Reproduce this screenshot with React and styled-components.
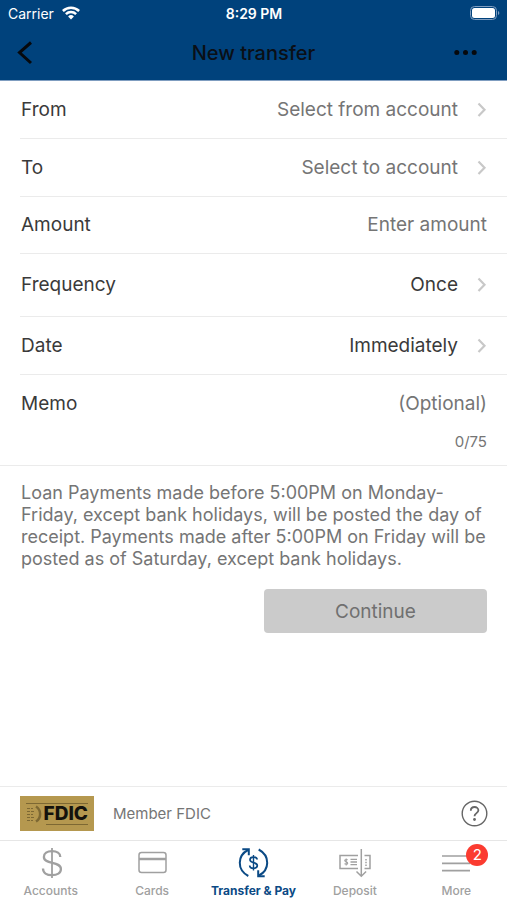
import React, { useState } from 'react';
import styled, { createGlobalStyle } from 'styled-components';

const GlobalStyle = createGlobalStyle`
  * {
    box-sizing: border-box;
  }
  body {
    margin: 0;
    background: #fff;
    color: #3a3a3a;
    font-family: Inter, "Liberation Sans", sans-serif;
  }
  button, input {
    font-family: inherit;
  }
`;

const Screen = styled.div`
  display: flex;
  flex-direction: column;
  min-height: 100vh;
`;

const Header = styled.header`
  background: #00427c;
  border-bottom: 1px solid #7f9dc0;
`;

const StatusBar = styled.div`
  display: grid;
  grid-template-columns: 1fr auto 1fr;
  align-items: center;
  height: 26px;
  padding: 0 7px 0 8px;
  color: #fff;
  font-size: 14px;
`;

const Carrier = styled.span`
  display: flex;
  align-items: center;
  gap: 8px;
`;

const Clock = styled.span`
  font-weight: 600;
`;

const Battery = styled.svg`
  justify-self: end;
`;

const NavBar = styled.div`
  display: grid;
  grid-template-columns: 1fr auto 1fr;
  align-items: center;
  height: 54px;
  padding: 0 16px;
`;

const Title = styled.h1`
  margin: 0;
  color: #0a0f16;
  font-size: 20px;
  font-weight: 500;
`;

const IconButton = styled.button`
  display: flex;
  justify-self: ${(props) => (props.$end ? 'end' : 'start')};
  padding: 0;
  border: none;
  background: none;
  color: ${(props) => props.$color || '#06090d'};
  cursor: pointer;
`;

const Form = styled.form`
  display: flex;
  flex-direction: column;
  flex: 1;
`;

const Row = styled.div`
  display: flex;
  align-items: center;
  height: ${(props) => props.$height || '58px'};
  margin-left: 20px;
  padding: 0 20px 0 1px;
  border-bottom: 1px solid #ebebeb;
`;

const PickerRow = styled(Row).attrs({ as: 'button', type: 'button' })`
  border-width: 0 0 1px;
  border-style: solid;
  background: none;
  color: inherit;
  text-align: left;
  cursor: pointer;
`;

const Label = styled.label`
  flex: 1;
  font-size: 19px;
  line-height: 24px;
`;

const Value = styled.span`
  margin-right: 16px;
  color: ${(props) => (props.$chosen ? '#3a3a3a' : '#757575')};
  font-size: 19px;
  line-height: 24px;
`;

const TextInput = styled.input`
  flex: 1;
  width: 100%;
  min-width: 0;
  padding: 0;
  border: none;
  outline: none;
  background: none;
  color: #3a3a3a;
  font-size: 19px;
  line-height: 24px;
  text-align: right;
  &::placeholder {
    color: #757575;
    opacity: 1;
  }
`;

const MemoBlock = styled.div`
  padding: 17px 20px 13px 21px;
  border-bottom: 1px solid #ebebeb;
`;

const MemoLine = styled.div`
  display: flex;
  align-items: center;
`;

const Counter = styled.div`
  margin-top: 16px;
  color: #757575;
  font-size: 15px;
  line-height: 20px;
  text-align: right;
`;

const Notice = styled.p`
  margin: 16px 16px 19px 21px;
  color: #757575;
  font-size: 18px;
  line-height: 22px;
`;

const SubmitButton = styled.button`
  align-self: flex-end;
  width: 44%;
  height: 44px;
  margin-right: 20px;
  border: none;
  border-radius: 4px;
  background: #cbcbcb;
  color: #707070;
  font-size: 19px;
`;

const MemberBar = styled.div`
  display: flex;
  align-items: center;
  height: 54px;
  padding: 0 19px 0 20px;
  border-top: 1px solid #ebebeb;
`;

const FdicBadge = styled.div`
  display: flex;
  flex-direction: column;
  justify-content: center;
  width: 74px;
  height: 35px;
  padding: 0 6px;
  background: #b5984f;
  color: #14120c;
`;

const BadgeRule = styled.div`
  height: 1px;
  margin-left: ${(props) => props.$indent || '0'};
  background: #7d6833;
`;

const BadgeLine = styled.div`
  display: flex;
  align-items: center;
  justify-content: space-between;
  height: 20px;
  font-size: 19px;
  font-weight: 800;
`;

const MemberText = styled.span`
  flex: 1;
  margin-left: 19px;
  color: #757575;
  font-size: 15px;
`;

const TabBar = styled.nav`
  display: flex;
  height: 60px;
  border-top: 1px solid #e6e6e6;
`;

const Tab = styled.a`
  display: flex;
  flex: 1;
  flex-direction: column;
  align-items: center;
  padding-top: 6px;
  color: ${(props) => (props.$active ? '#0b4a85' : '#a0a0a0')};
  font-size: 12px;
  font-weight: ${(props) => (props.$active ? 700 : 500)};
  line-height: 16px;
  text-decoration: none;
  white-space: nowrap;
`;

const TabIcon = styled.span`
  position: relative;
  display: flex;
  height: 36px;
`;

const Badge = styled.span`
  position: absolute;
  top: -3px;
  right: -16px;
  width: 22px;
  height: 22px;
  border-radius: 50%;
  background: #fb3b30;
  color: #fff;
  font-size: 15px;
  font-weight: 400;
  line-height: 22px;
  text-align: center;
`;

const Chevron = () => (
  <svg width="13" height="16" viewBox="0 0 13 16" fill="none" stroke="#c8c8c8" strokeWidth="2.200">
    <path d="M4.500 1.500l6 6.200-6 6.200" />
  </svg>
);

const WifiIcon = () => (
  <svg width="18" height="14" viewBox="0 0 18 14" fill="none" stroke="#fff" strokeWidth="2.500">
    <path d="M0.900 5a11.600 11.600 0 0 1 16.200 0" />
    <path d="M3.900 8.200a7.300 7.300 0 0 1 10.200 0" />
    <path d="M9 13.500l-2.900-3a4.200 4.200 0 0 1 5.800 0z" fill="#fff" stroke="none" />
  </svg>
);

const DollarIcon = () => (
  <svg width="32" height="32" viewBox="0 0 32 32" fill="none" stroke="currentColor" strokeWidth="2.300">
    <path d="M17 1v30" strokeWidth="1.800" />
    <path d="M25.300 10c0-3.700-3.400-5.800-8.300-5.800S8.900 6.400 8.900 10c0 7.800 17 4 17 12 0 4-3.700 6.200-8.900 6.200s-9-2.400-9-6.700" />
  </svg>
);

const CardIcon = () => (
  <svg width="32" height="32" viewBox="0 0 32 32" fill="none" stroke="currentColor" strokeWidth="1.500">
    <rect x="3" y="5.500" width="27" height="20" rx="2.500" />
    <path d="M3 12h27" strokeWidth="2.500" />
  </svg>
);

const TransferIcon = () => (
  <svg width="32" height="32" viewBox="0 0 32 32" fill="none" stroke="currentColor" strokeWidth="2">
    <path d="M10.300 29C-1.500 22.500-0.500 8.500 10 3" />
    <path d="M4.300 2.200h6.500v6" />
    <path d="M20.700 2.500C32.500 9 31.500 23 21 28.500" />
    <path d="M26.700 29.300h-6.500v-6" />
    <path d="M15.500 8v15.500" strokeWidth="1.400" />
    <path d="M19.100 12.600c0-1.500-1.400-2.500-3.600-2.500s-3.500 1-3.500 2.600c0 3.800 7.300 2.100 7.300 5.900 0 1.700-1.500 2.700-3.800 2.700s-3.800-1-3.800-2.800" strokeWidth="1.700" />
  </svg>
);

const DepositIcon = () => (
  <svg width="32" height="32" viewBox="0 0 32 32" fill="none" stroke="currentColor" strokeWidth="1.500">
    <path d="M19 8.500H1v13h18M25.500 8.500H31v13h-5.500" />
    <path d="M22.300 2v27M17.500 24.500l4.800 4.700 4.800-4.700" />
    <path d="M11.500 12.300h6.500M11.500 15h6.500M11.500 17.700h6.500" strokeWidth="1.300" />
    <path d="M8.700 13c-.500-.600-3-.900-3 .600 0 1.400 3 1.100 3 2.600s-2.500 1.300-3.200.500M7.200 11.500v7" strokeWidth="1.100" />
    <path d="M27 12v7" strokeDasharray="1.500 1.200" />
  </svg>
);

const MenuIcon = () => (
  <svg width="32" height="32" viewBox="0 0 32 32" fill="none" stroke="currentColor" strokeWidth="1.700">
    <path d="M2 9h28M2 16.300h28M2 23.600h28" />
  </svg>
);

const tabs = [
  { name: 'Accounts', icon: <DollarIcon /> },
  { name: 'Cards', icon: <CardIcon /> },
  { name: 'Transfer & Pay', icon: <TransferIcon />, active: true },
  { name: 'Deposit', icon: <DepositIcon /> },
  { name: 'More', icon: <MenuIcon />, badge: 2 },
];

const MEMO_MAX = 75;

export default function App() {
  const [amount, setAmount] = useState('');
  const [memo, setMemo] = useState('');

  return (
    <Screen>
      <GlobalStyle />
      <Header>
        <StatusBar>
          <Carrier>
            Carrier
            <WifiIcon />
          </Carrier>
          <Clock>8:29 PM</Clock>
          <Battery width="30" height="14" viewBox="0 0 30 14" fill="none">
            <rect x="0.500" y="0.500" width="26" height="13" rx="4" stroke="#7f9dc0" />
            <rect x="2" y="2" width="23" height="10" rx="2.500" fill="#fff" />
            <path d="M28 5v4c1.800-.700 1.800-3.300 0-4z" fill="#7f9dc0" />
          </Battery>
        </StatusBar>
        <NavBar>
          <IconButton type="button" aria-label="Back">
            <svg width="18" height="24" viewBox="0 0 18 24" fill="none" stroke="currentColor" strokeWidth="3">
              <path d="M15 1.500L3.500 11.500 15 22" />
            </svg>
          </IconButton>
          <Title>New transfer</Title>
          <IconButton type="button" aria-label="Options" $end>
            <svg width="38" height="24" viewBox="0 0 38 24" fill="currentColor">
              <circle cx="3.800" cy="11.500" r="2.500" />
              <circle cx="12.500" cy="11.500" r="2.500" />
              <circle cx="21.200" cy="11.500" r="2.500" />
            </svg>
          </IconButton>
        </NavBar>
      </Header>

      <Form onSubmit={(e) => e.preventDefault()}>
        <PickerRow>
          <Label as="span">From</Label>
          <Value>Select from account</Value>
          <Chevron />
        </PickerRow>
        <PickerRow>
          <Label as="span">To</Label>
          <Value>Select to account</Value>
          <Chevron />
        </PickerRow>
        <Row $height="57px">
          <Label htmlFor="amount">Amount</Label>
          <TextInput
            id="amount"
            type="text"
            inputMode="decimal"
            placeholder="Enter amount"
            value={amount}
            onChange={(e) => setAmount(e.target.value)}
          />
        </Row>
        <PickerRow $height="63px">
          <Label as="span">Frequency</Label>
          <Value $chosen>Once</Value>
          <Chevron />
        </PickerRow>
        <PickerRow>
          <Label as="span">Date</Label>
          <Value $chosen>Immediately</Value>
          <Chevron />
        </PickerRow>
        <MemoBlock>
          <MemoLine>
            <Label htmlFor="memo">Memo</Label>
            <TextInput
              id="memo"
              type="text"
              maxLength={MEMO_MAX}
              placeholder="(Optional)"
              value={memo}
              onChange={(e) => setMemo(e.target.value)}
            />
          </MemoLine>
          <Counter>{memo.length}/{MEMO_MAX}</Counter>
        </MemoBlock>

        <Notice>
          Loan Payments made before 5:00PM on Monday-Friday, except bank holidays, will be
          posted the day of receipt. Payments made after 5:00PM on Friday will be posted as
          of Saturday, except bank holidays.
        </Notice>
        <SubmitButton type="submit" disabled>Continue</SubmitButton>
      </Form>

      <MemberBar>
        <FdicBadge>
          <BadgeRule />
          <BadgeLine>
            <svg width="17" height="20" viewBox="0 0 17 20" fill="none" stroke="#7d6833">
              <path d="M1 4.500h6M1 7.500h7M1 10.500h6M1 13.500h7M1 16.500h6" strokeDasharray="3 1" strokeWidth="1" />
              <path d="M10 2.500c5.500 3.500 5.500 11.500 0 15" strokeWidth="2.500" />
            </svg>
            FDIC
          </BadgeLine>
          <BadgeRule $indent="20px" />
        </FdicBadge>
        <MemberText>Member FDIC</MemberText>
        <IconButton type="button" aria-label="Help" $color="#666">
          <svg width="27" height="27" viewBox="0 0 27 27" fill="none" stroke="currentColor">
            <circle cx="13.500" cy="13.500" r="12.300" strokeWidth="1.400" />
            <path d="M9.800 10.700c0-5 7.600-4.700 7.600-.400 0 2.900-3.900 2.800-3.900 6" strokeWidth="1.800" />
            <circle cx="13.500" cy="19.500" r="1.400" fill="currentColor" stroke="none" />
          </svg>
        </IconButton>
      </MemberBar>

      <TabBar>
        {tabs.map((tab) => (
          <Tab key={tab.name} href="#" $active={tab.active}>
            <TabIcon>
              {tab.icon}
              {tab.badge && <Badge>{tab.badge}</Badge>}
            </TabIcon>
            {tab.name}
          </Tab>
        ))}
      </TabBar>
    </Screen>
  );
}
